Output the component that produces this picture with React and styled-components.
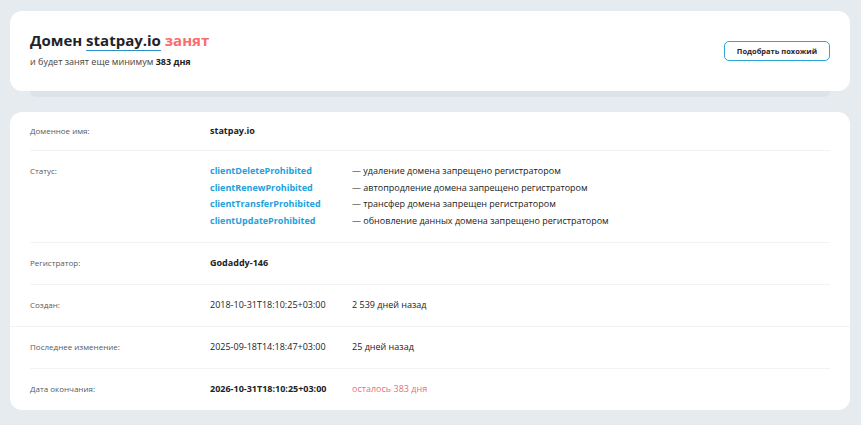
import React from "react";
import styled, { createGlobalStyle } from "styled-components";

const GlobalStyle = createGlobalStyle`
  html, body {
    margin: 0;
    padding: 0;
    background: #e6ebef;
    font-family: "Open Sans", "Noto Sans", sans-serif;
    color: #222;
  }
`;

const Page = styled.div`
  padding: 11px 11px 15px 10px;
`;

const HeadWrap = styled.div`
  margin-bottom: 15px;
`;

const HeadCard = styled.div`
  background: #fff;
  border-radius: 12px;
  height: 80px;
  padding: 0 20px;
  display: flex;
  align-items: center;
  justify-content: space-between;
  position: relative;
  z-index: 1;
`;

const Stack = styled.div`
  height: 6px;
  margin: 0 20px;
  background: #dce3e9;
  border-radius: 0 0 6px 6px;
`;

const Title = styled.h1`
  margin: 0 0 5px;
  font-size: 15px;
  font-weight: 700;
  color: #1f2329;
  line-height: 20px;
`;

const Domain = styled.span`
  text-decoration: underline;
  text-decoration-color: #2a8fc7;
  text-underline-offset: 4px;
  text-decoration-thickness: 1px;
`;

const Busy = styled.span`
  color: #fb6b6b;
`;

const Sub = styled.div`
  font-size: 9px;
  color: #444;
  margin-bottom: 4px;
  b {
    color: #222;
    font-weight: 700;
  }
`;

const Button = styled.button`
  font-family: inherit;
  font-size: 7.5px;
  font-weight: 700;
  color: #2a2430;
  background: #fff;
  border: 1px solid #2aa6d8;
  border-radius: 5px;
  width: 106px;
  height: 20px;
  cursor: pointer;
`;

const InfoCard = styled.div`
  background: #fff;
  border-radius: 12px;
  padding: 0 20px;
`;

const Row = styled.div`
  display: grid;
  grid-template-columns: 180px 142px 1fr;
  align-items: start;
  padding: ${(p) => (p.$first ? "11px 0 11px" : "12px 0 13px")};
  border-bottom: 1px solid ${(p) => (p.$last ? "transparent" : "#f1f3f5")};
  ${(p) => p.$last && "padding-bottom: 12px;"}
  ${(p) => p.$wide && "margin: 0 -20px; padding-left: 20px; padding-right: 20px;"}
`;

const Label = styled.div`
  font-size: 8px;
  color: #555b61;
  line-height: 16px;
`;

const Value = styled.div`
  font-size: 9px;
  line-height: 16px;
  font-weight: ${(p) => (p.$bold ? 700 : 400)};
  color: #222;
`;

const Note = styled.div`
  font-size: 9px;
  line-height: 16px;
  color: ${(p) => (p.$alert ? "#ea6f7c" : "#222")};
`;

const StatusList = styled.div`
  grid-column: 2 / 4;
  display: grid;
  grid-template-columns: 142px 1fr;
`;

const StatusName = styled.div`
  font-size: 9px;
  font-weight: 700;
  color: #23a1dc;
  line-height: 16.5px;
`;

const StatusDesc = styled.div`
  font-size: 9px;
  color: #222;
  line-height: 16.5px;
`;

const statuses = [
  ["clientDeleteProhibited", "— удаление домена запрещено регистратором"],
  ["clientRenewProhibited", "— автопродление домена запрещено регистратором"],
  ["clientTransferProhibited", "— трансфер домена запрещен регистратором"],
  ["clientUpdateProhibited", "— обновление данных домена запрещено регистратором"],
];

export default function App() {
  return (
    <Page>
      <GlobalStyle />
      <HeadWrap>
        <HeadCard>
          <div>
            <Title>
              Домен <Domain>statpay.io</Domain> <Busy>занят</Busy>
            </Title>
            <Sub>
              и будет занят еще минимум <b>383 дня</b>
            </Sub>
          </div>
          <Button>Подобрать похожий</Button>
        </HeadCard>
        <Stack />
      </HeadWrap>

      <InfoCard>
        <Row $first>
          <Label>Доменное имя:</Label>
          <Value $bold>statpay.io</Value>
        </Row>
        <Row>
          <Label>Статус:</Label>
          <StatusList>
            {statuses.map(([name, desc]) => (
              <React.Fragment key={name}>
                <StatusName>{name}</StatusName>
                <StatusDesc>{desc}</StatusDesc>
              </React.Fragment>
            ))}
          </StatusList>
        </Row>
        <Row>
          <Label>Регистратор:</Label>
          <Value $bold>Godaddy-146</Value>
        </Row>
        <Row $wide>
          <Label>Создан:</Label>
          <Value>2018-10-31T18:10:25+03:00</Value>
          <Note>2 539 дней назад</Note>
        </Row>
        <Row>
          <Label>Последнее изменение:</Label>
          <Value>2025-09-18T14:18:47+03:00</Value>
          <Note>25 дней назад</Note>
        </Row>
        <Row $last>
          <Label>Дата окончания:</Label>
          <Value $bold>2026-10-31T18:10:25+03:00</Value>
          <Note $alert>осталось 383 дня</Note>
        </Row>
      </InfoCard>
    </Page>
  );
}
